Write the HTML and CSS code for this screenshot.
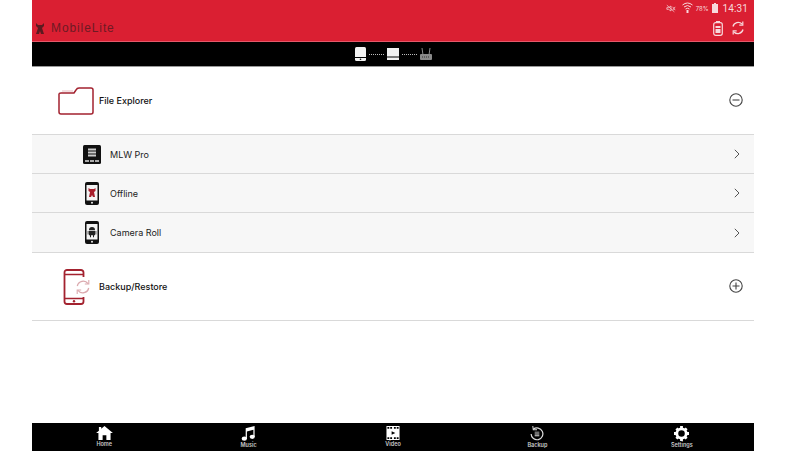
FILE: index.html
```html
<!DOCTYPE html>
<html lang="en">
<head>
    <meta charset="UTF-8">
    <meta name="viewport" content="width=device-width, initial-scale=1.0">
    <title>MobileLite</title>
    <link rel="stylesheet" href="styles.css">
</head>
<body>
    <div class="app">
        <header class="topbar">
            <div class="status">
                <svg class="mute" width="10" height="9" viewBox="0 0 12 10"><path d="M1 4h2l3-2v6L3 6H1zM8 3l3 4M11 3L8 7M1 1l9 8" fill="none" stroke="#f3c6cb" stroke-width="1"/></svg>
                <svg class="wifi" width="11" height="12" viewBox="0 0 11 12"><path d="M.5 3Q5.500-1 10.500 3M2 5Q5.500 2 9 5M3.500 7Q5.500 5.500 7.500 7" fill="none" stroke="#f7d9dc" stroke-width="1"/><path d="M4.500 8h2v3h-2z" fill="#f7d9dc"/></svg>
                <span class="battery-text">78%</span>
                <svg class="batt" width="6" height="10" viewBox="0 0 6 10"><path d="M2 0h2v1h2v9H0V1h2z" fill="#f7d9dc"/></svg>
                <span class="clock">14:31</span>
            </div>
            <div class="brand-row">
                <div class="brand">
                    <svg width="10" height="13" viewBox="0 0 10 13"><path d="M1 1l2 2h4l2-2v3L7 6l2 6H6L5 9l-1 3H1l2-6-2-2z" fill="#5c1a20"/></svg>
                    <span class="brand-name">MobileLite</span>
                </div>
                <div class="top-actions">
                    <svg width="10" height="15" viewBox="0 0 10 15"><rect x=".7" y="1.700" width="8.600" height="12.600" rx="2" fill="none" stroke="#f7d9dc" stroke-width="1.200"/><path d="M3 .5h4" stroke="#f7d9dc"/><path d="M2.500 5h5v2h-5zM2.500 8h5v4h-5z" fill="#f7d9dc"/></svg>
                    <svg width="14" height="14" viewBox="0 0 14 14"><path d="M2 5.500A5.300 5.300 0 0 1 11 3M12 8.500A5.300 5.300 0 0 1 3 11" fill="none" stroke="#f7d9dc" stroke-width="1.300"/><path d="M11.800.6v3.600H8.300M2.200 13.400V9.800h3.500" fill="none" stroke="#f7d9dc" stroke-width="1.200"/></svg>
                </div>
            </div>
        </header>

        <div class="connbar">
            <svg width="11" height="14" viewBox="0 0 11 14"><rect width="11" height="14" rx="1.500" fill="#f2f2f2"/><path d="M0 10.500h11" stroke="#000"/><circle cx="5.500" cy="12.300" r=".8" fill="#000"/></svg>
            <span class="dots"></span>
            <svg width="12" height="12" viewBox="0 0 12 12"><path d="M0 0h12v12H0z" fill="#f2f2f2"/><path d="M0 9h12" stroke="#000"/></svg>
            <span class="dots"></span>
            <svg width="12" height="13" viewBox="0 0 12 13"><path d="M2 0l1 7M10 0L9 7" stroke="#8a8a8a"/><rect y="6" width="12" height="6" rx="1" fill="#8a8a8a"/><path d="M2 9h8" stroke="#333" stroke-dasharray="1 1"/></svg>
        </div>

        <main class="list">
            <section class="group">
                <svg class="group-icon" width="36" height="28" viewBox="0 0 36 28"><path d="M1 7V25a2 2 0 0 0 2 2h30a2 2 0 0 0 2-2V3a2 2 0 0 0-2-2H21q-2 0-3 2l-2 3H3q-2 0-2 1z" fill="none" stroke="#a3222f" stroke-width="1.500"/><path d="M4 4h11" stroke="#e8bcc1"/></svg>
                <span class="group-name">File Explorer</span>
                <svg class="toggle" width="14" height="14" viewBox="0 0 14 14"><circle cx="7" cy="7" r="6.200" fill="none" stroke="#444" stroke-width="1.100"/><path d="M3.500 7h7" stroke="#444" stroke-width="1.100"/></svg>
            </section>

            <div class="row">
                <span class="row-icon">
                    <svg width="18" height="19" viewBox="0 0 18 19"><rect width="18" height="19" rx="1.500" fill="#111"/><path d="M5 3.500h8v2H5zM5 6.500h8v2H5zM5 9.500h8v2H5z" fill="#ccc"/><path d="M2 15h4v2H2zM7 15h4v2H7zM12 15h4v2h-4z" fill="#aaa"/></svg>
                </span>
                <span class="row-name">MLW Pro</span>
                <svg class="chevron" width="6" height="10" viewBox="0 0 6 10"><path d="M.8.8L5 5 .8 9.200" fill="none" stroke="#555" stroke-width="1"/></svg>
            </div>
            <div class="row">
                <span class="row-icon">
                    <svg width="14" height="23" viewBox="0 0 14 23"><rect width="14" height="23" rx="2" fill="#111"/><rect x="1.500" y="3" width="11" height="15.500" fill="#f4f4f4"/><path d="M3.500 6l1.500 1h4l1.500-1v3l-1.500 1 1 5H8L7 13l-1 2H4l1-5-1.500-1z" fill="#a81f2c"/><circle cx="7" cy="20.700" r="1" fill="#eee"/></svg>
                </span>
                <span class="row-name">Offline</span>
                <svg class="chevron" width="6" height="10" viewBox="0 0 6 10"><path d="M.8.8L5 5 .8 9.200" fill="none" stroke="#555" stroke-width="1"/></svg>
            </div>
            <div class="row row-last">
                <span class="row-icon">
                    <svg width="14" height="23" viewBox="0 0 14 23"><rect width="14" height="23" rx="2" fill="#111"/><rect x="1.500" y="3" width="11" height="15.500" fill="#f4f4f4"/><path d="M4 9a3 3 0 0 1 6 0zM4 9.800h6v4.500H9v2H8v-2H6v2H5v-2H4zM2.700 10h.8v3.500h-.8zM10.500 10h.8v3.500h-.8z" fill="#222"/><circle cx="7" cy="20.700" r="1" fill="#eee"/></svg>
                </span>
                <span class="row-name">Camera Roll</span>
                <svg class="chevron" width="6" height="10" viewBox="0 0 6 10"><path d="M.8.8L5 5 .8 9.200" fill="none" stroke="#555" stroke-width="1"/></svg>
            </div>

            <section class="group group-backup">
                <svg class="group-icon" width="28" height="36" viewBox="0 0 28 36">
                    <path d="M20.500 8V3.500A2.500 2.500 0 0 0 18 1H4A2.500 2.500 0 0 0 1.500 3.500v29A2.500 2.500 0 0 0 4 35h14a2.500 2.500 0 0 0 2.500-2.500V28" fill="none" stroke="#a3222f" stroke-width="1.800"/>
                    <path d="M1.500 5.500h19M1.500 29.500h19" stroke="#a3222f" stroke-width="1.300"/>
                    <circle cx="11" cy="32.300" r="1.200" fill="#a3222f"/>
                    <path d="M14.300 17A6 6 0 0 1 25 14.700M25.700 19A6 6 0 0 1 15 21.300" fill="none" stroke="#dba9ae" stroke-width="1.300"/>
                    <path d="M25.800 11v4h-4M14.200 25v-4h4" fill="none" stroke="#dba9ae" stroke-width="1.100"/>
                </svg>
                <span class="group-name">Backup/Restore</span>
                <svg class="toggle" width="14" height="14" viewBox="0 0 14 14"><circle cx="7" cy="7" r="6.200" fill="none" stroke="#444" stroke-width="1.100"/><path d="M3.500 7h7M7 3.500v7" stroke="#444" stroke-width="1.100"/></svg>
            </section>
        </main>

        <nav class="tabbar">
            <a class="tab">
                <svg width="17" height="14" viewBox="0 0 18 15"><path d="M9 0l9 7.500h-2.500V15H11v-5H7v5H2.500V7.500H0l3-2.500V1h2.500v2z" fill="#fff"/></svg>
                <span>Home</span>
            </a>
            <a class="tab">
                <svg width="15" height="15" viewBox="0 0 15 16"><path d="M4.500 2.500L14 0v11.500h-1.300V4L5.800 5.800v8h-1.300z" fill="#fff"/><ellipse cx="3" cy="13.500" rx="2.800" ry="2.300" fill="#fff"/><ellipse cx="11.500" cy="11.500" rx="2.800" ry="2.300" fill="#fff"/></svg>
                <span>Music</span>
            </a>
            <a class="tab">
                <svg width="14" height="14" viewBox="0 0 14 15"><rect width="14" height="15" fill="#fff"/><path d="M1 1h2v2H1zM4 1h2v2H4zM8 1h2v2H8zM11 1h2v2h-2zM1 12h2v2H1zM4 12h2v2H4zM8 12h2v2H8zM11 12h2v2h-2z" fill="#000"/><path d="M5.500 5.500l4 2-4 2z" fill="#000"/></svg>
                <span>Video</span>
            </a>
            <a class="tab">
                <svg width="14" height="15" viewBox="0 0 15 16"><path d="M3.500 3.500A6.300 6.300 0 1 1 1.200 8.500" fill="none" stroke="#ddd" stroke-width="1.300"/><path d="M3 0l.5 4H7.500" fill="none" stroke="#ddd" stroke-width="1.100"/><path d="M5 6h5v1H5zM5 8h5v1H5zM5 10h5v1H5z" fill="#ddd"/></svg>
                <span>Backup</span>
            </a>
            <a class="tab">
                <svg width="15" height="15" viewBox="0 0 16 16"><circle cx="8" cy="8" r="5" fill="none" stroke="#fff" stroke-width="3"/><path d="M6.500 0h3v3h-3zM6.500 13h3v3h-3zM0 6.500h3v3H0zM13 6.500h3v3h-3zM1.500 3.600l2.100-2.100 2 2-2.100 2.100zM10.400 12.500l2.100-2.100 2 2-2.100 2.100zM1.500 12.400l2-2 2.100 2.100-2 2zM10.400 3.500l2.100-2 2 2-2 2.100z" fill="#fff"/></svg>
                <span>Settings</span>
            </a>
        </nav>
    </div>
</body>
</html>
```

FILE: styles.css
```css
html, body {
    margin: 0;
    padding: 0;
    height: 100%;
    background-color: #fff;
}
body {
    font-family: "Inter", "Liberation Sans", Arial, sans-serif;
    overflow: hidden;
}
.app {
    width: 722px;
    height: 451px;
    margin-left: 32px;
    display: flex;
    flex-direction: column;
}
.topbar {
    height: 41px;
    background-color: #da1f32;
    border-bottom: 1px solid #e4596a;
    padding: 0 16px 0 0;
    color: #f7d9dc;
}
.status {
    height: 14px;
    padding-top: 1px;
    display: flex;
    align-items: center;
    justify-content: flex-end;
    gap: 3px;
    margin-right: -10px;
}
.mute {
    margin-right: 3px;
}
.battery-text {
    font-size: 6px;
}
.clock {
    font-family: "Roboto", "Liberation Sans", sans-serif;
    font-size: 10px;
    margin-left: 2px;
    letter-spacing: .1px;
}
.brand-row {
    height: 26px;
    display: flex;
    align-items: center;
    justify-content: space-between;
}
.brand {
    display: flex;
    align-items: center;
    gap: 6px;
    margin-left: 3px;
}
.brand-name {
    font-family: "Liberation Sans", Arial, sans-serif;
    font-size: 12px;
    color: #6e1a24;
    letter-spacing: .9px;
}
.top-actions {
    display: flex;
    align-items: center;
    gap: 8px;
    margin-right: -7px;
}
.connbar {
    height: 24px;
    background-color: #000;
    border-bottom: 1px solid #999;
    display: flex;
    align-items: center;
    justify-content: center;
    gap: 3px;
}
.dots {
    width: 15px;
    border-top: 1px dotted #bbb;
}
.list {
    flex: 1;
}
.group {
    height: 67px;
    display: flex;
    align-items: center;
    border-bottom: 1px solid #d9d9d9;
    padding: 0 11px 0 26px;
}
.group-backup {
    padding-left: 31px;
}
.group-icon {
    margin-right: 5px;
}
.group-backup .group-icon {
    margin-right: 8px;
}
.group-name {
    flex: 1;
    font-size: 9px;
    font-weight: 500;
    color: #111;
}
.toggle {
    margin-bottom: 2px;
}
.row {
    height: 38px;
    display: flex;
    align-items: center;
    background-color: #f7f7f7;
    border-bottom: 1px solid #d9d9d9;
    padding: 0 14px 0 51px;
}
.row-last {
    height: 39px;
}
.row-icon {
    width: 18px;
    margin-right: 9px;
    display: flex;
    justify-content: center;
}
.row-name {
    flex: 1;
    font-size: 9px;
    color: #222;
}
.tabbar {
    height: 28px;
    background-color: #000;
    display: flex;
}
.tab {
    flex: 1;
    display: flex;
    flex-direction: column;
    align-items: center;
    padding-top: 3px;
    color: #ccc;
    font-size: 5.500px;
    font-weight: 600;
    line-height: 7px;
    gap: 1px;
}
```
